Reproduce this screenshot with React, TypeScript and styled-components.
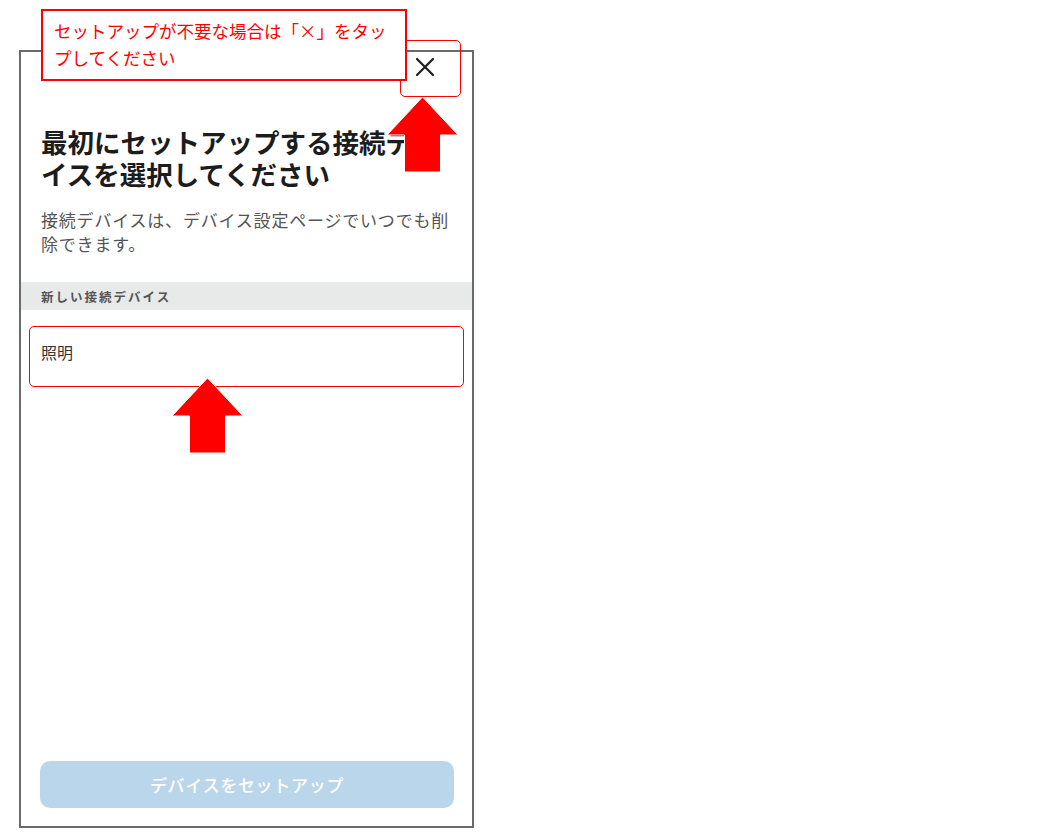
import React from "react";
import styled, { createGlobalStyle } from "styled-components";

const Global = createGlobalStyle`
  html, body { margin: 0; padding: 0; background: #ffffff; }
  body { font-family: "Noto Sans CJK JP", "Noto Sans", sans-serif; }
  * { box-sizing: border-box; }
`;

const Stage = styled.div`
  position: relative;
  width: 1058px;
  height: 840px;
  padding: 50px 0 0 19px;
  overflow: hidden;
`;

const Phone = styled.div`
  width: 455px;
  height: 778px;
  border: 2px solid #6a6a6a;
  display: flex;
  flex-direction: column;
  background: #fff;
`;

const Header = styled.div`
  height: 74px;
  display: flex;
  justify-content: flex-end;
  align-items: flex-start;
  padding: 5px 37px 0 0;
`;

const CloseButton = styled.button`
  width: 20px;
  height: 20px;
  padding: 0;
  border: none;
  background: none;
  display: flex;
  align-items: center;
  justify-content: center;
  color: #222;
`;

const Title = styled.h1`
  margin: 0;
  padding: 0 20px;
  font-size: 26.5px;
  line-height: 32px;
  font-weight: 700;
  color: #1c1c1c;
  white-space: nowrap;
`;

const Description = styled.p`
  margin: 18px 0 0;
  padding: 0 20px;
  font-size: 17px;
  letter-spacing: 0.8px;
  line-height: 23.5px;
  color: #555;
  white-space: nowrap;
`;

const SectionBar = styled.div`
  margin-top: 27px;
  height: 28px;
  background: #e8e9e9;
  display: flex;
  align-items: center;
  padding: 0 20px;
  font-size: 12.5px;
  letter-spacing: 2px;
  font-weight: 700;
  color: #555;
`;

const ItemRow = styled.div`
  height: 88px;
  display: flex;
  align-items: center;
  padding: 0 20px 0 20px;
  margin-top: -2px;
  font-size: 16px;
  color: #333;
`;

const Spacer = styled.div`
  flex: 1;
`;

const SetupButton = styled.button`
  margin: 0 18px 18px 19px;
  height: 47px;
  border: none;
  border-radius: 10px;
  background: #bad6ea;
  color: #fff;
  font-family: "Noto Sans CJK JP", "Noto Sans", sans-serif;
  font-size: 17px;
  letter-spacing: 0.7px;
  font-weight: 500;
  display: flex;
  align-items: center;
  justify-content: center;
`;

const Callout = styled.div`
  position: absolute;
  left: 41px;
  top: 9px;
  width: 366px;
  height: 72px;
  border: 2px solid #ff0000;
  background: #fff;
  padding: 6px 0 0 11px;
  font-size: 17.5px;
  line-height: 27px;
  color: #ff0000;
  white-space: nowrap;
`;

const Highlight = styled.div<{ $l: number; $t: number; $w: number; $h: number }>`
  position: absolute;
  left: ${(p) => p.$l}px;
  top: ${(p) => p.$t}px;
  width: ${(p) => p.$w}px;
  height: ${(p) => p.$h}px;
  border: 1.5px solid #ff0000;
  border-radius: 5px;
`;

const ArrowBox = styled.svg<{ $l: number; $t: number }>`
  position: absolute;
  left: ${(p) => p.$l}px;
  top: ${(p) => p.$t}px;
  overflow: visible;
`;

function UpArrow({ left, top }: { left: number; top: number }) {
  return (
    <ArrowBox $l={left} $t={top} width="71" height="75" viewBox="0 0 71 75">
      <polygon
        points="35.5,0 71,38 53.5,38 53.5,75 17.5,75 17.5,38 0,38"
        fill="#ff0000"
        stroke="#ffffff"
        strokeWidth="1"
      />
    </ArrowBox>
  );
}

export default function App() {
  return (
    <>
      <Global />
      <Stage>
        <Phone>
          <Header>
            <CloseButton aria-label="close">
              <svg width="20" height="20" viewBox="0 0 20 20">
                <path d="M2 2 L18 18 M18 2 L2 18" stroke="#222" strokeWidth="2.3" strokeLinecap="round" />
              </svg>
            </CloseButton>
          </Header>
          <Title>
            最初にセットアップする接続デバ
            <br />
            イスを選択してください
          </Title>
          <Description>
            接続デバイスは、デバイス設定ページでいつでも削
            <br />
            除できます。
          </Description>
          <SectionBar>新しい接続デバイス</SectionBar>
          <ItemRow>照明</ItemRow>
          <Spacer />
          <SetupButton>デバイスをセットアップ</SetupButton>
        </Phone>

        <Highlight $l={400} $t={40} $w={61} $h={57} />
        <Highlight $l={29} $t={326} $w={435} $h={61} />
        <Callout>
          セットアップが不要な場合は「×」をタッ
          <br />
          プしてください
        </Callout>
        <UpArrow left={387} top={97} />
        <UpArrow left={172} top={378} />
      </Stage>
    </>
  );
}
